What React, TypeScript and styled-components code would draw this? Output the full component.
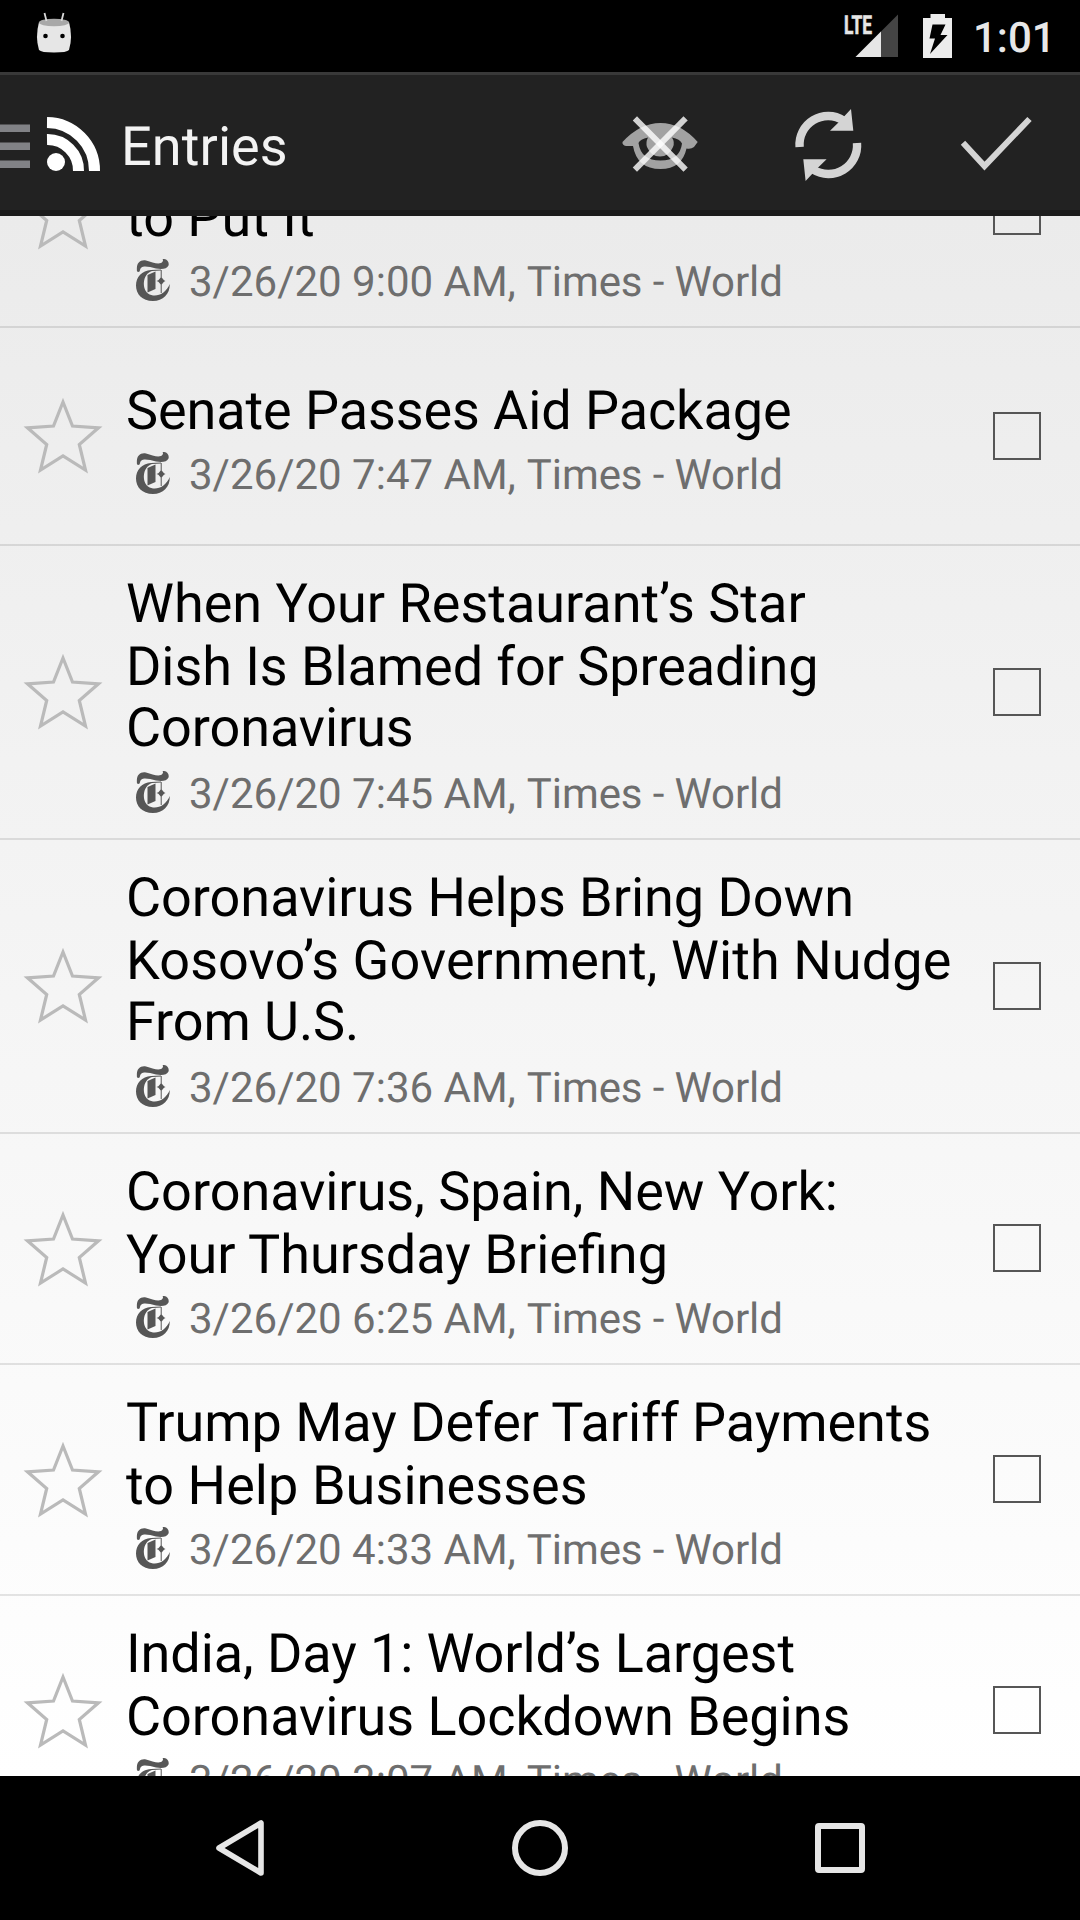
import React from "react";
import styled, { createGlobalStyle } from "styled-components";

const Global = createGlobalStyle`
  * { box-sizing: border-box; }
  body {
    margin: 0;
    background: #000;
    font-family: Roboto, "Liberation Sans", sans-serif;
    text-rendering: geometricPrecision;
  }
`;

const Screen = styled.div`
  width: 1080px;
  height: 1920px;
  display: flex;
  flex-direction: column;
  overflow: hidden;
  background: #000;
`;

const StatusBar = styled.header`
  flex: none;
  height: 72px;
  display: flex;
  align-items: flex-start;
  justify-content: space-between;
`;

const StatusIcons = styled.div`
  display: flex;
  align-items: flex-start;
`;

const Clock = styled.time`
  width: 108px;
  padding: 14px 0 0 1px;
  font-size: 42px;
  line-height: 49px;
  font-weight: 500;
  color: #e8e8e8;
`;

const ActionBar = styled.nav`
  flex: none;
  height: 144px;
  padding-top: 7px;
  display: flex;
  align-items: center;
  background: #222;
  border-top: 3px solid #393939;
  border-bottom: 6px solid #1b1b1b;
`;

const BarTitle = styled.h1`
  margin: 0;
  flex: 1;
  padding: 3px 0 0 20px;
  font-size: 54px;
  line-height: 64px;
  font-weight: 400;
  letter-spacing: 0.1px;
  color: #f3f3f3;
`;

const Icon = styled.svg`
  display: block;
  flex: none;
`;

const List = styled.main`
  flex: none;
  height: 1560px;
  overflow: hidden;
  display: flex;
  flex-direction: column;
  background: linear-gradient(#ebebeb, #ffffff);
`;

const Row = styled.article<{ $height: number; $clipped?: number }>`
  flex: none;
  height: ${(p) => p.$height}px;
  margin-top: ${(p) => -(p.$clipped ?? 0)}px;
  display: flex;
  align-items: center;
  border-bottom: 2px solid rgba(0, 0, 0, 0.1);
`;

const Content = styled.div`
  flex: 1;
  padding-top: 2px;
`;

const Title = styled.h2`
  margin: 0;
  font-size: 54px;
  line-height: 63px;
  font-weight: 400;
  color: #000;
`;

const TitleLine = styled.span<{ $tracking: number }>`
  display: block;
  height: 63px;
  letter-spacing: ${(p) => p.$tracking}px;
  font-variant-ligatures: common-ligatures;
  white-space: nowrap;

  &:nth-child(3) {
    margin: -2px 0 2px;
  }
`;

const Meta = styled.div`
  height: 51px;
  padding-top: 14px;
  display: flex;
  align-items: center;
  font-size: 42px;
  line-height: 50px;
  color: #6e6e6e;
  white-space: nowrap;
`;

const Source = styled.span`
  margin-left: 11px;
  letter-spacing: -0.1px;
`;

const CheckBox = styled.button`
  flex: none;
  width: 48px;
  height: 48px;
  margin: 0 39px 0.9px 0;
  padding: 0;
  border: 2px solid #565656;
  background: transparent;
`;

const NavBar = styled.footer`
  flex: none;
  height: 144px;
  display: flex;
  justify-content: center;
  background: #000;
`;

const NavButton = styled.button`
  width: 300px;
  height: 144px;
  padding: 0;
  border: 0;
  background: none;
  display: flex;
  align-items: center;
  justify-content: center;
`;

const Star = () => (
  <Icon width="126" height="78" viewBox="0 0 126 78">
    <path
      d="M63 5 L72.500 29 L98.500 30.800 L79.300 47.500 L85.500 73 L63 59 L40.500 73 L46.700 47.500 L27.500 30.800 L53.500 29 Z"
      fill="none"
      stroke="#bababa"
      strokeWidth="3.200"
    />
  </Icon>
);

const TimesLogo = () => (
  <Icon width="63" height="48" viewBox="0 2 63 48">
    <g fill="#565656">
      <path d="M11 14.500 C10 6 14 2.500 20 3.500 C26 5 31 7.500 35 6 C37 5 37.500 3 36.500 2 C41 1.500 43.500 5 42.500 8.500 C41 12 36 12.500 30 11.500 C24 10 18 8.500 15.500 10.500 C13.500 12 14.500 14 13 15 Z" />
      <path d="M26 14 C16 17 16 32 22 36.500 C29 41 39 38 43.800 27 C44 37 37 44 27 44 C16 44 10 37 10 28.500 C10 20 16 13.500 25 13 L35 12.500 V13.500 Z" />
      <path d="M21.500 18 L29.500 14.500 V32 L21.500 35.500 Z" />
      <path d="M34.700 13 H35.700 V20.500 L38 23.200 L39.500 24 L38 24.800 L35.700 27.500 V36 H34.700 V27.500 L32.400 24.800 L30.500 24 L32.400 23.200 L34.700 20.500 Z" />
    </g>
  </Icon>
);

type Line = { text: string; tracking?: number };
type Entry = { height: number; clipped?: number; time: string; lines: Line[] };

const entries: Entry[] = [
  { height: 231, clipped: 119, time: "9:00", lines: [{ text: "" }, { text: "to Put It" }] },
  { height: 218, time: "7:47", lines: [{ text: "Senate Passes Aid Package", tracking: -0.09 }] },
  {
    height: 294,
    time: "7:45",
    lines: [
      { text: "When Your Restaurant’s Star" },
      { text: "Dish Is Blamed for Spreading", tracking: -0.08 },
      { text: "Coronavirus", tracking: -0.08 },
    ],
  },
  {
    height: 294,
    time: "7:36",
    lines: [
      { text: "Coronavirus Helps Bring Down", tracking: -0.04 },
      { text: "Kosovo’s Government, With Nudge", tracking: 0.09 },
      { text: "From U.S.", tracking: -0.1 },
    ],
  },
  { height: 231, time: "6:25", lines: [{ text: "Coronavirus, Spain, New York:", tracking: -0.03 }, { text: "Your Thursday Briefing" }] },
  {
    height: 231,
    time: "4:33",
    lines: [
      { text: "Trump May Defer Tariff Payments", tracking: -0.04 },
      { text: "to Help Businesses", tracking: 0.07 },
    ],
  },
  {
    height: 231,
    time: "3:07",
    lines: [
      { text: "India, Day 1: World’s Largest", tracking: -0.08 },
      { text: "Coronavirus Lockdown Begins", tracking: -0.04 },
    ],
  },
];

const refreshHalf = (
  <>
    <path d="M799.600 147 A28.600 28.600 0 0 1 843.500 120.500" fill="none" stroke="#d4d4d4" strokeWidth="8.400" />
    <path d="M851 109 L853.300 130.700 L830 130.700 L840 121 L844.500 116 Z" fill="#d4d4d4" />
  </>
);

export default function App() {
  return (
    <>
      <Global />
      <Screen>
        <StatusBar>
          <Icon width="108" height="72" viewBox="0 0 108 72">
            <path d="M39 22 Q54 16 69 22 Q73 37 69 50 Q67 52.500 54 52.500 Q41 52.500 39 50 Q35 37 39 22 Z" fill="#e6e6e6" />
            <ellipse cx="54" cy="22.500" rx="15" ry="3.800" fill="#a8a8a8" />
            <path d="M44.500 13 L46.500 21 M63.500 13 L61.500 21" stroke="#d8d8d8" strokeWidth="1.800" />
            <circle cx="45.500" cy="36" r="2.300" fill="#000" />
            <circle cx="62.500" cy="36" r="2.300" fill="#000" />
          </Icon>
          <StatusIcons>
            <Icon width="80" height="72" viewBox="840 0 80 72">
              <text x="844" y="33.500" fontFamily="Roboto" fontSize="26" fontWeight="700" fill="#e6e6e6" stroke="#e6e6e6" strokeWidth="0.600" textLength="28" lengthAdjust="spacingAndGlyphs">LTE</text>
              <path d="M855.500 57 L898 14.500 V57 Z" fill="#444" />
              <path d="M855.500 57 L881 31.500 V57 Z" fill="#e6e6e6" />
            </Icon>
            <Icon width="52" height="72" viewBox="920 0 52 72">
              <path d="M923 18 H930.500 V14 H945 V18 H952 V58 H923 Z" fill="#ececec" />
              <path d="M932.500 24.500 H945.500 L940.500 35 H947.500 L930 54 L935 38.500 H929.500 Z" fill="#000" />
            </Icon>
            <Clock>1:01</Clock>
          </StatusIcons>
        </StatusBar>

        <ActionBar>
          <Icon width="101" height="72" viewBox="0 110 101 72">
            <path d="M0 124.500H30V132H0Z M0 142.500H30V150H0Z M0 160.500H30V168H0Z" fill="#818286" />
            <circle cx="56" cy="162" r="9" fill="#fff" />
            <path d="M47 139.500 A31 31 0 0 1 78.500 171" fill="none" stroke="#fff" strokeWidth="11" />
            <path d="M47 122.500 A48 48 0 0 1 94.500 171" fill="none" stroke="#fff" strokeWidth="11" />
          </Icon>
          <BarTitle>Entries</BarTitle>
          <Icon width="168" height="96" viewBox="576 98 168 96">
            <path
              fillRule="evenodd"
              d="M622.500 142 Q640 123 660.500 123 Q681 123 697.700 142 L694 147 Q691 149.500 686.500 148.500 Q682 169 660.500 169 Q637 169 633 146 L626 146 Q622 145 622.500 142 Z M648 137.500 Q640 139 638.500 143 Q641 160.500 660.500 160.500 Q680 160.500 682 143.500 Q680 139 672 137.500 Q675 142 673 147 Q669 156.500 660 156.500 Q651 156.500 647 147 Q645.500 142 648 137.500 Z"
              fill="#a2a2a2"
            />
            <g stroke="#fff" strokeOpacity="0.800" strokeWidth="6" strokeLinecap="square">
              <path d="M637 120.500 L683.500 167.500" />
              <path d="M683.500 120.500 L637 167.500" />
            </g>
          </Icon>
          <Icon width="168" height="96" viewBox="744 98 168 96">
            {refreshHalf}
            <g transform="rotate(180 828.300 145)">{refreshHalf}</g>
          </Icon>
          <Icon width="168" height="96" viewBox="912 98 168 96">
            <path d="M963 142.700 L984.500 166 L1029.500 119" fill="none" stroke="#d4d4d4" strokeWidth="6" />
          </Icon>
        </ActionBar>

        <List>
          {entries.map((e) => (
            <Row key={e.time} $height={e.height} $clipped={e.clipped}>
              <Star />
              <Content>
                <Title>
                  {e.lines.map((line, i) => (
                    <TitleLine key={i} $tracking={line.tracking ?? 0}>
                      {line.text}
                    </TitleLine>
                  ))}
                </Title>
                <Meta>
                  <TimesLogo />
                  3/26/20 {e.time} AM,
                  <Source>Times - World</Source>
                </Meta>
              </Content>
              <CheckBox aria-label="Mark as read" />
            </Row>
          ))}
        </List>

        <NavBar>
          <NavButton aria-label="Back">
            <Icon width="72" height="72" viewBox="0 0 72 72">
              <path d="M57 11 V61 L15 36 Z" fill="none" stroke="#e6e6e6" strokeWidth="5.600" strokeLinejoin="round" />
            </Icon>
          </NavButton>
          <NavButton aria-label="Home">
            <Icon width="72" height="72" viewBox="0 0 72 72">
              <circle cx="36" cy="36" r="25" fill="none" stroke="#e6e6e6" strokeWidth="6" />
            </Icon>
          </NavButton>
          <NavButton aria-label="Recent apps">
            <Icon width="72" height="72" viewBox="0 0 72 72">
              <rect x="14" y="14" width="44" height="44" rx="1" fill="none" stroke="#e6e6e6" strokeWidth="6" />
            </Icon>
          </NavButton>
        </NavBar>
      </Screen>
    </>
  );
}
